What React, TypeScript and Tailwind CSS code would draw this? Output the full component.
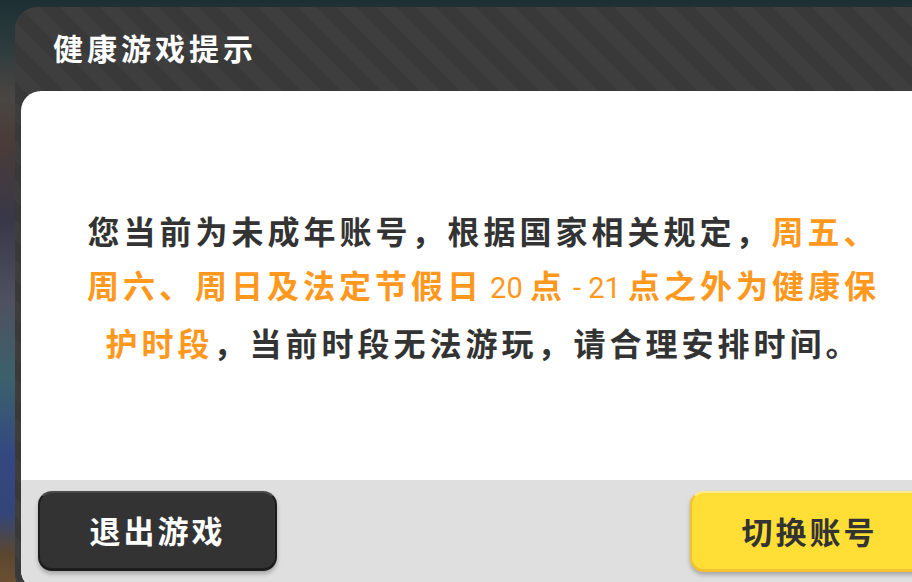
export default function App() {
  return (
    <div className="h-[582px] w-[912px] overflow-hidden bg-[linear-gradient(180deg,#1d2f32_0%,#2a3a3c_7%,#4a4642_17%,#4a3c38_24%,#393848_38%,#4e5160_52%,#3b616b_65%,#344880_78%,#33467a_88%,#5a4630_95%,#6a5030_100%)] font-['Noto_Sans_CJK_SC',sans-serif]">
      <div className="ml-[15px] mt-[7px] flex h-[589px] w-[937px] flex-col rounded-[22px] bg-[repeating-linear-gradient(45deg,#3e3e3e_0px,#3e3e3e_14px,#393939_14px,#393939_28px)] px-[6px] pb-[6px]">
        <div className="flex h-[84px] shrink-0 items-center pb-[4px] pl-[32px]">
          <h1 className="text-[30px] font-bold tracking-[4px] text-white">健康游戏提示</h1>
        </div>

        <div className="flex flex-1 flex-col overflow-hidden rounded-[20px] bg-white">
          <div className="flex flex-1 items-center justify-center">
            <p className="text-center text-[32px] font-bold leading-[54px] tracking-[4px] text-[#333333]">
              您当前为未成年账号，根据国家相关规定，<span className="text-[#ff981d]">周五、</span>
              <br />
              <span className="text-[#ff981d]">
                周六、周日及法定节假日
                <span className="font-['Liberation_Sans_Narrow',Roboto,sans-serif] text-[29px] font-normal tracking-[0px]"> 20 </span>
                点
                <span className="font-['Liberation_Sans_Narrow',Roboto,sans-serif] text-[29px] font-normal tracking-[0px]"> - 21 </span>
                点之外为健康保
              </span>
              <br />
              <span className="text-[#ff981d]">护时段</span>，当前时段无法游玩，请合理安排时间。
            </p>
          </div>

          <div className="flex h-[110px] shrink-0 justify-between bg-[#dfdfdf] px-[17px] pt-[11px]">
            <button className="flex h-[80px] w-[239px] items-center justify-center rounded-[14px] border-2 border-b-[3px] border-[#1d1d1d] border-t-[#4a4a4a] bg-[#333333] text-[31px] font-bold tracking-[3px] text-white shadow-[0_3px_4px_rgba(0,0,0,0.25)]">
              退出游戏
            </button>
            <button className="flex h-[81px] w-[239px] items-center justify-center rounded-[14px] border-2 border-b-[3px] border-[#f2c232] border-t-[#ffe98a] bg-[#ffdf36] text-[31px] font-bold tracking-[3px] text-[#333333] shadow-[0_3px_4px_rgba(0,0,0,0.25)]">
              切换账号
            </button>
          </div>
        </div>
      </div>
    </div>
  );
}
